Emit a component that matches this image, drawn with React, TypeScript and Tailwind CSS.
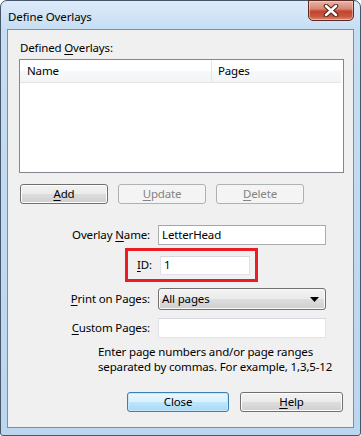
import React from "react";

const font = { fontFamily: '"Noto Sans", "Open Sans", sans-serif' };

function Btn({
  children,
  w,
  disabled,
  primary,
}: {
  children: React.ReactNode;
  w: string;
  disabled?: boolean;
  primary?: boolean;
}) {
  let cls =
    "h-[20px] rounded-[3px] border flex items-center justify-center text-[11.5px] leading-none ";
  if (disabled) {
    cls += "border-[#adb2b5] bg-[#f4f4f4] text-[#838383]";
  } else if (primary) {
    cls +=
      "border-[#3c7fb1] text-black bg-[linear-gradient(to_bottom,#eaf6fd_0%,#d9f0fc_50%,#bee6fd_51%,#a7d9f5_100%)] shadow-[inset_0_0_0_1px_#c7e6f8]";
  } else {
    cls +=
      "border-[#707070] text-black bg-[linear-gradient(to_bottom,#f2f2f2_0%,#ebebeb_50%,#dddddd_51%,#cfcfcf_100%)] shadow-[inset_0_0_0_1px_#fcfcfc]";
  }
  return <div className={cls + " " + w}>{children}</div>;
}

function Key({ children }: { children: React.ReactNode }) {
  return <span className="underline underline-offset-[2px] decoration-[1px]">{children}</span>;
}

export default function App() {
  return (
    <div
      className="w-[361px] h-[436px] relative overflow-hidden bg-white"
      style={font}
    >
      <div className="w-full h-full rounded-t-[7px] rounded-b-[3px] border border-[#46576a] bg-[linear-gradient(to_bottom,#dcebfa_0px,#c6ddf3_30px,#bcd6ef_100%)] flex flex-col">
        {/* title bar */}
        <div className="h-[28px] shrink-0 flex items-start relative">
          <div className="pl-[7px] pt-[8px] text-[11.5px] tracking-[-0.1px] text-black leading-[16px]">
            Define Overlays
          </div>
          <div className="absolute right-[6px] top-[-1px] w-[46px] h-[21px] rounded-b-[5px] border border-[#5b2b25] bg-[linear-gradient(to_bottom,#eab5a8_0%,#d88876_40%,#c4442d_55%,#c9553d_80%,#dd8a73_100%)] shadow-[inset_0_0_0_1px_rgba(255,220,210,0.5)] flex items-center justify-center">
            <svg width="18" height="13" viewBox="0 0 18 13">
              <path
                d="M4 2 L14 11 M14 2 L4 11"
                stroke="#4a2018"
                strokeWidth="4.5"
                strokeLinecap="round"
              />
              <path
                d="M4 2 L14 11 M14 2 L4 11"
                stroke="#ffffff"
                strokeWidth="2.6"
                strokeLinecap="round"
              />
            </svg>
          </div>
        </div>
        {/* client */}
        <div className="mx-[6px] h-[399px] border border-[#7f8e9d] bg-[#f0f0f0] flex flex-col text-[11.5px] tracking-[-0.15px] text-black">
          <div className="pl-[12px] pt-[10px] leading-[16px]">
            Defined <Key>O</Key>verlays:
          </div>
          {/* list */}
          <div className="ml-[11px] mt-[3px] w-[325px] h-[114px] border border-[#828790] bg-white flex flex-col">
            <div className="h-[23px] w-[321px] flex border-b border-[#e5e5e5] bg-[linear-gradient(to_bottom,#ffffff_0%,#ffffff_50%,#f7f8fa_51%,#f3f4f6_100%)]">
              <div className="w-[192px] border-r border-[#e5e5e5] pl-[7px] flex items-center leading-none">
                Name
              </div>
              <div className="pl-[6px] flex items-center leading-none">Pages</div>
            </div>
          </div>
          {/* buttons */}
          <div className="ml-[12px] mt-[11px] flex gap-[10px]">
            <Btn w="w-[88px]">
              <Key>A</Key>dd
            </Btn>
            <Btn w="w-[88px]" disabled>
              <Key>U</Key>pdate
            </Btn>
            <Btn w="w-[88px]" disabled>
              <Key>D</Key>elete
            </Btn>
          </div>
          {/* overlay name */}
          <div className="mt-[21px] flex items-center">
            <div className="w-[142px] text-right pr-[0px] leading-none">
              Overlay <Key>N</Key>ame:
            </div>
            <div className="ml-[8px] w-[168px] h-[20px] border border-[#abadb3] border-t-[#a3a6ad] bg-white flex items-center pl-[3px] leading-none">
              LetterHead
            </div>
          </div>
          {/* ID */}
          <div className="mt-[3px] flex">
            <div className="ml-[117px] w-[133px] h-[34px] border-[3px] border-[#ed1c24] flex items-center">
              <div className="ml-[9px] leading-none">
                <Key>I</Key>D:
              </div>
              <div className="ml-[8px] w-[90px] h-[19px] border border-[#e2e3ea] border-t-[#d5d7de] bg-white flex items-center pl-[3px] leading-none">
                1
              </div>
            </div>
          </div>
          {/* print on pages */}
          <div className="mt-[6px] flex items-center">
            <div className="w-[142px] text-right leading-none">
              <Key>P</Key>rint on Pages:
            </div>
            <div className="ml-[8px] w-[168px] h-[22px] rounded-[3px] border border-[#707070] bg-[linear-gradient(to_bottom,#f2f2f2_0%,#ebebeb_50%,#dddddd_51%,#cfcfcf_100%)] shadow-[inset_0_0_0_1px_#fafafa] flex items-center justify-between pl-[3px] pr-[6px] leading-none">
              <span>All pages</span>
              <svg width="9" height="5" viewBox="0 0 9 5">
                <path d="M0 0 H9 L4.5 5 Z" fill="#000" />
              </svg>
            </div>
          </div>
          {/* custom pages */}
          <div className="mt-[8px] flex items-center">
            <div className="w-[142px] text-right leading-none">
              <Key>C</Key>ustom Pages:
            </div>
            <div className="ml-[8px] w-[168px] h-[20px] border border-[#e2e3ea] border-t-[#d5d7de] bg-white" />
          </div>
          <div className="ml-[90px] mt-[6px] leading-[15px]">
            <div>Enter page numbers and/or page ranges</div>
            <div>separated by commas. For example, 1,3,5-12</div>
          </div>
          {/* bottom buttons */}
          <div className="mt-[18px] ml-[119px] flex gap-[11px]">
            <Btn w="w-[102px]" primary>
              Close
            </Btn>
            <Btn w="w-[103px]">
              <Key>H</Key>elp
            </Btn>
          </div>
        </div>
      </div>
    </div>
  );
}
